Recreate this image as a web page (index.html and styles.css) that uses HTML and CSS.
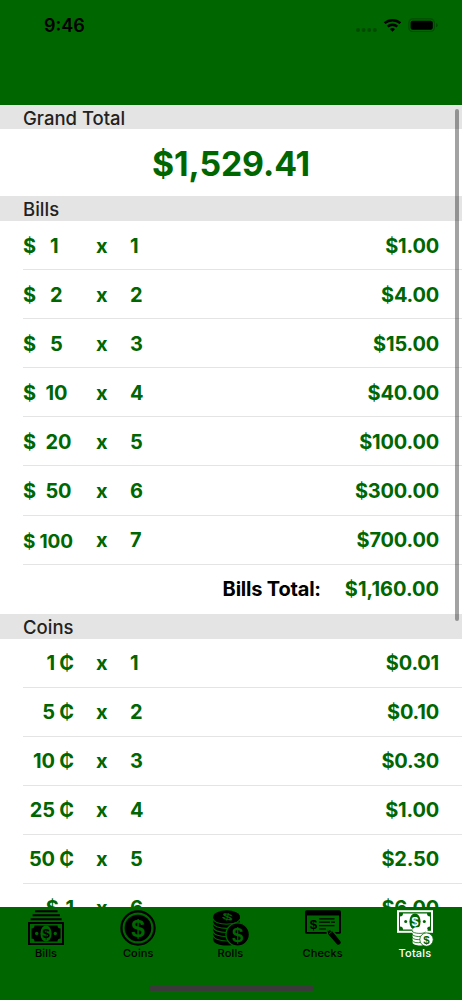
FILE: index.html
```html
<!DOCTYPE html>
<html lang="en">
<head>
<meta charset="utf-8">
<title>Totals</title>
<link rel="stylesheet" href="styles.css">
</head>
<body>
<div class="app">
  <header class="status">
    <span class="time">9:46</span>
    <svg class="indicators" width="84" height="18" viewBox="0 0 84 18">
      <g fill="#004b00"><circle cx="3" cy="13" r="2"/><circle cx="8.6" cy="13" r="2"/><circle cx="14.2" cy="13" r="2"/><circle cx="19.8" cy="13" r="2"/></g>
      <g fill="none" stroke="#000" stroke-width="2.5"><path d="M29.6 6.2a11.7 11.7 0 0 1 15.8 0"/><path d="M32.7 9.6a7 7 0 0 1 9.6 0"/></g>
      <path d="M37.5 14.8l-2.6-2.6a3.9 3.9 0 0 1 5.2 0z"/>
      <rect x="53.9" y="1.9" width="25.4" height="12.6" rx="3.8" fill="none" stroke="#004b00" stroke-width="1.2"/>
      <rect x="55.6" y="3.8" width="22.2" height="9" rx="2"/>
      <path d="M81 6q1.7.6 1.7 2.2t-1.7 2.2z" fill="#004b00"/>
    </svg>
  </header>
  <main class="list">
    <h2 class="section">Grand Total</h2>
    <div class="grand">$1,529.41</div>
    <h2 class="section bills">Bills</h2>
    <div class="row"><span class="sign">$</span><span class="value">1</span><span class="times">x</span><span class="count">1</span><span class="amount">$1.00</span></div>
    <div class="row"><span class="sign">$</span><span class="value">2</span><span class="times">x</span><span class="count">2</span><span class="amount">$4.00</span></div>
    <div class="row"><span class="sign">$</span><span class="value">5</span><span class="times">x</span><span class="count">3</span><span class="amount">$15.00</span></div>
    <div class="row"><span class="sign">$</span><span class="value tens">10</span><span class="times">x</span><span class="count">4</span><span class="amount">$40.00</span></div>
    <div class="row"><span class="sign">$</span><span class="value tens">20</span><span class="times">x</span><span class="count">5</span><span class="amount">$100.00</span></div>
    <div class="row"><span class="sign">$</span><span class="value tens">50</span><span class="times">x</span><span class="count">6</span><span class="amount">$300.00</span></div>
    <div class="row"><span class="hundred">$ 100</span><span class="times">x</span><span class="count">7</span><span class="amount">$700.00</span></div>
    <div class="row total"><span class="label">Bills Total:</span><span class="amount">$1,160.00</span></div>
    <h2 class="section coins">Coins</h2>
    <div class="row"><span class="coin">1 ₵</span><span class="times">x</span><span class="count">1</span><span class="amount">$0.01</span></div>
    <div class="row"><span class="coin">5 ₵</span><span class="times">x</span><span class="count">2</span><span class="amount">$0.10</span></div>
    <div class="row"><span class="coin">10 ₵</span><span class="times">x</span><span class="count">3</span><span class="amount">$0.30</span></div>
    <div class="row"><span class="coin">25 ₵</span><span class="times">x</span><span class="count">4</span><span class="amount">$1.00</span></div>
    <div class="row"><span class="coin">50 ₵</span><span class="times">x</span><span class="count">5</span><span class="amount">$2.50</span></div>
    <div class="row"><span class="coin dollar">$ 1</span><span class="times">x</span><span class="count">6</span><span class="amount">$6.00</span></div>
    <div class="scrollbar"></div>
  </main>
  <footer class="bottom">
    <nav class="tabs">
      <a class="tab">
        <svg class="icon" viewBox="0 0 36 36">
          <path d="M7 .2h22.500v2H7zM4.600 4.200h27.300v2H4.600zM2.600 8.200h31v2H2.600z"/>
          <rect x="1" y="13" width="34" height="21" fill="none" stroke="#000" stroke-width="2"/>
          <path d="M6.500 15.600h23a3 3 0 0 0 3 3v9.800a3 3 0 0 0-3 3h-23a3 3 0 0 0-3-3v-9.800a3 3 0 0 0 3-3z"/>
          <ellipse class="cut" cx="18" cy="23.500" rx="5.600" ry="8"/><circle class="cut" cx="8.700" cy="23.500" r="1.700"/><circle class="cut" cx="27.300" cy="23.500" r="1.700"/>
          <text x="18" y="28" font-size="13">$</text>
        </svg>
        <span>Bills</span>
      </a>
      <a class="tab">
        <svg class="icon" viewBox="0 0 36 36">
          <circle cx="18" cy="18" r="16.600" fill="none" stroke="#000" stroke-width="2.200"/><circle cx="18" cy="18" r="13.300"/>
          <text class="cut" x="18" y="26.500" font-size="24.500">$</text>
        </svg>
        <span>Coins</span>
      </a>
      <a class="tab">
        <svg class="icon" viewBox="0 0 36 36">
          <path d="M.2 7v22.500c0 8 26.800 8 26.800 0V7z"/>
          <g fill="none" stroke="#006600" stroke-width="1.100"><path d="M0 8.500c1 7.500 26 7.500 27.200 0M0 12.700c1 7.500 26 7.500 27.200 0M0 16.900c1 7.500 26 7.500 27.200 0M0 21.100c1 7.500 26 7.500 27.200 0M0 25.300c1 7.500 26 7.500 27.200 0"/></g>
          <ellipse cx="13.600" cy="6.800" rx="13.400" ry="6.500"/>
          <text class="cut" font-size="12" transform="translate(13.600 10) rotate(14) scale(1.600 .8)">$</text>
          <circle cx="24.700" cy="24.500" r="11.700" stroke="#006600" stroke-width="1.300"/>
          <text class="cut" x="24.700" y="31.500" font-size="20.500">$</text>
        </svg>
        <span>Rolls</span>
      </a>
      <a class="tab">
        <svg class="icon" viewBox="0 0 36 36">
          <path fill-rule="evenodd" d="M1.500.2h33q1.500 0 1.500 1.500v20.600q0 1.500-1.500 1.500h-33Q0 23.800 0 22.300V1.700Q0 .2 1.500.2zM2 5.500v16.400h32V5.500z"/>
          <text x="8.400" y="18.700" font-size="13.500">$</text>
          <path d="M14 8.800h15.500M14 12.200h11M14 15.600h15.500M14 19h7M26 12.200h4" fill="none" stroke="#000" stroke-width="1.200"/>
          <path d="M21.500 18.200l6.200 2.600 8 9.800q1.800 2.300-.2 4t-4 .1l-9-10.300z" stroke="#006600" stroke-width="1.300"/>
          <path d="M23.500 24.200l4-3.300M22 19l2 1-.9 1z" fill="none" stroke="#006600" stroke-width=".8"/>
        </svg>
        <span>Checks</span>
      </a>
      <a class="tab active">
        <svg class="icon" viewBox="0 0 36 36">
          <rect x="1" y="1.200" width="34" height="20.600" fill="none" stroke="#fff" stroke-width="2"/>
          <path d="M6 3.600h24a3 3 0 0 0 3 3v9.800a3 3 0 0 0-3 3H6a3 3 0 0 0-3-3V6.600a3 3 0 0 0 3-3z"/>
          <ellipse class="cut" cx="18" cy="11.500" rx="5.600" ry="8"/><circle class="cut" cx="8.700" cy="11.500" r="1.500"/><circle class="cut" cx="27.300" cy="11.500" r="1.500"/>
          <text x="18" y="15.700" font-size="12.500">$</text>
          <path d="M15.600 19.500c0-3.500 15-3.500 15 0v13c0 4-15 4-15 0z"/>
          <path d="M15 21c1.500 3 12 3 13.500 1M15 24.100c1.500 2.600 8 3 11 1.700M15 27.200c1.500 2.600 6 2.800 8.500 2.100M15 30.300c1.500 2.600 6 2.800 8.500 2.100" fill="none" stroke="#006600" stroke-width=".8"/>
          <circle cx="29.500" cy="29.600" r="6.700" stroke="#006600" stroke-width=".8"/>
          <text class="cut" x="29.500" y="33.700" font-size="11.500">$</text>
        </svg>
        <span>Totals</span>
      </a>
    </nav>
    <div class="home"></div>
  </footer>
</div>
</body>
</html>
```

FILE: styles.css
```css
* { box-sizing: border-box; }
body { margin: 0; font-family: Inter, "Liberation Sans", sans-serif; }
.app { width: 462px; height: 1000px; display: flex; flex-direction: column; overflow: hidden; background: #fff; }
.status { height: 105px; flex: none; background: #006600; display: flex; justify-content: space-between; align-items: flex-start; padding: 17px 23px 0 44px; }
.time { font-size: 18px; line-height: 18px; font-weight: 600; letter-spacing: 0; }
.indicators { display: block; }
.list { position: relative; flex: none; height: 802px; overflow: hidden; color: #006600; font-weight: 700; font-size: 20px; letter-spacing: -.2px; }
.section { margin: 0; height: 24.400px; padding-left: 23px; background: #e4e4e4; color: #222; font-size: 18.500px; line-height: 26px; font-weight: 500; letter-spacing: 0; }
.section.bills { height: 25px; }
.section.coins { height: 25px; }
.grand { height: 67.020px; line-height: 69px; text-align: center; font-size: 33.800px; letter-spacing: -.1px; }
.row { height: 49.020px; margin-left: 23px; padding: .5px 23px 0 0; border-bottom: 1px solid #e4e4e4; display: flex; align-items: center; }
.total { border: 0; padding-top: 0; justify-content: flex-end; gap: 24px; color: #000; }
.label { letter-spacing: -.2px; }
.sign { width: 27px; }
.value { width: 46px; }
.tens { margin-left: -4.500px; width: 50.500px; }
.hundred { width: 73px; font-size: 19px; padding-top: 3px; }
.coin { width: 51px; margin-right: 22px; text-align: right; white-space: nowrap; letter-spacing: -.1px; word-spacing: -.3px; }
.dollar { word-spacing: 2px; }
.times { width: 34px; }
.amount { margin-left: auto; color: #006600; }
.total .amount { margin-left: 0; letter-spacing: 0; }
.scrollbar { position: absolute; right: 3px; top: 4px; width: 4px; height: 512px; border-radius: 2px; background: rgba(0,0,0,.36); }
.bottom { height: 93px; flex: none; background: #006600; display: flex; flex-direction: column; align-items: center; justify-content: space-between; padding-bottom: 9px; }
.tabs { display: flex; width: 461px; align-self: flex-start; padding-top: 3px; }
.tab { flex: 1; display: flex; flex-direction: column; align-items: center; font-size: 11px; line-height: 13px; font-weight: 500; letter-spacing: .15px; color: #000; }
.icon { width: 36px; height: 36px; display: block; overflow: visible; fill: #000; font-family: "Liberation Sans", sans-serif; font-weight: 700; text-anchor: middle; letter-spacing: 0; }
.tab span { margin-top: 1px; }
.active { color: #fff; }
.active .icon { fill: #fff; }
.icon .cut { fill: #006600; }
.home { width: 165px; height: 5px; border-radius: 3px; background: #3a3a3a; }
```
